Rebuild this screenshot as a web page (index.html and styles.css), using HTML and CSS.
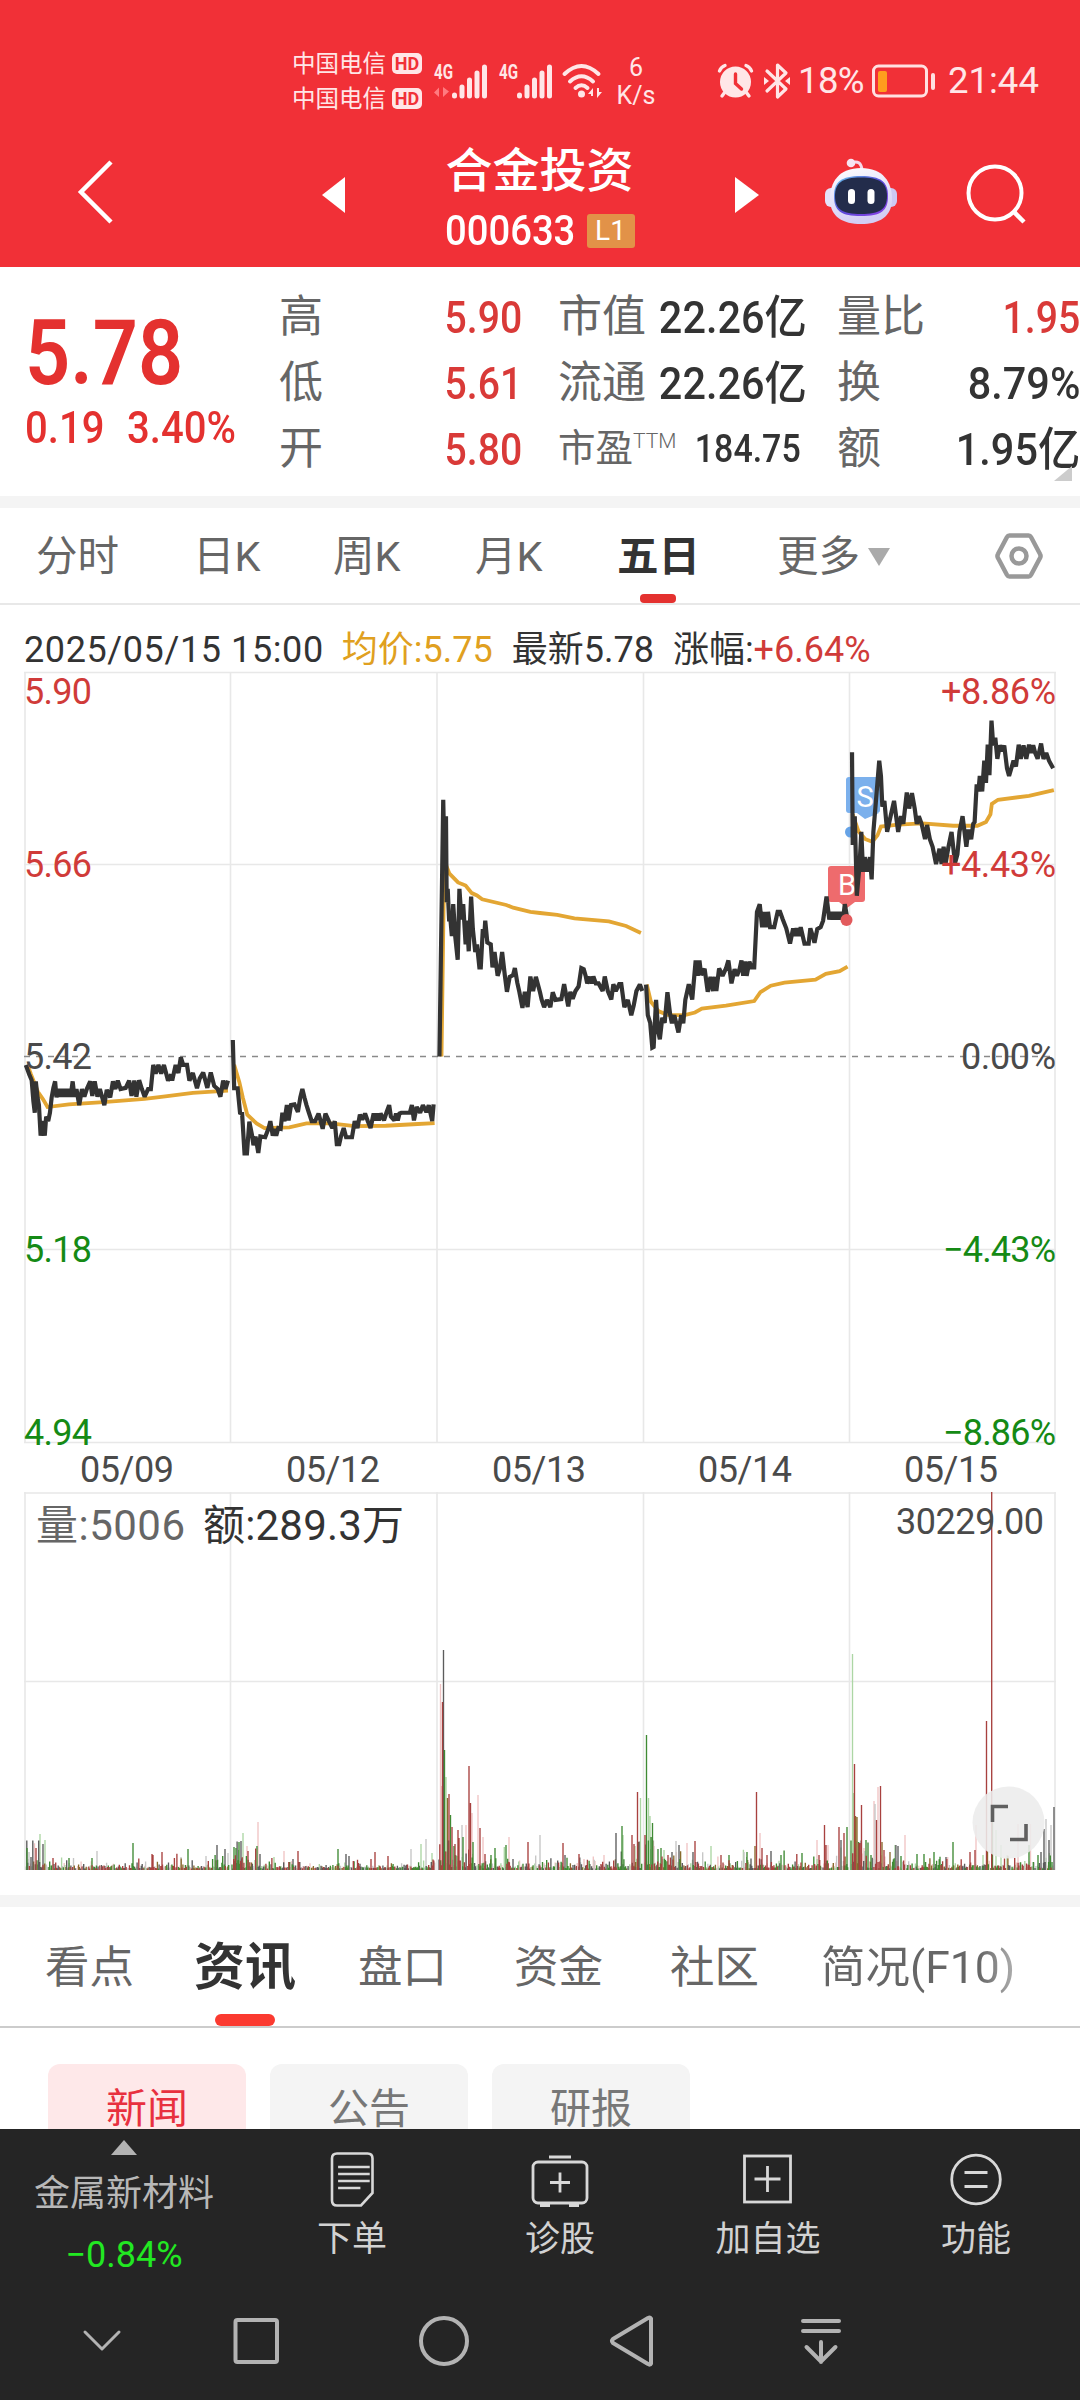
FILE: index.html
```html
<!DOCTYPE html>
<html lang="zh-CN">
<head>
<meta charset="utf-8">
<title>合金投资 000633</title>
<link rel="stylesheet" href="styles.css">
</head>
<body>
<div class="screen">
  <header class="header">
    <div class="status">
      <div class="carriers">
        <div class="carrier"><span>中国电信</span><b class="hd">HD</b></div>
        <div class="carrier"><span>中国电信</span><b class="hd">HD</b></div>
      </div>
      <svg class="signal" width="56" height="36" viewBox="0 0 56 36">
        <text x="0" y="16" textLength="19" lengthAdjust="spacingAndGlyphs" class="net">4G</text>
        <path d="M0 29.500l5-5v9.500zM9 24v10l6-5.500z" fill="#ff7b80"/>
        <path d="M20.500 33v-1M28 33V24M35.500 33V17M43 33V10M50.500 33V4" class="bars"/>
      </svg>
      <svg class="signal" width="56" height="36" viewBox="0 0 56 36">
        <text x="0" y="16" textLength="19" lengthAdjust="spacingAndGlyphs" class="net">4G</text>
        <path d="M20.500 33v-1M28 33V24M35.500 33V17M43 33V10M50.500 33V4" class="bars"/>
      </svg>
      <svg width="42" height="36" viewBox="0 0 42 36">
        <path d="M2.500 11Q19.500-5 36.500 11M8 18.500Q19.500 8 31 18.500M13.500 25Q19.500 19.500 25.500 25" fill="none" stroke="#ffe6e7" stroke-width="4" stroke-linecap="round"/>
        <circle cx="19.500" cy="31" r="3.500" fill="#ffe6e7"/>
        <path d="M26 31l5-6v8h-2v-2zM40 29l-5 6v-10h2v4z" fill="#ffe6e7"/>
      </svg>
      <div class="speed"><span>6</span><span>K/s</span></div>
      <svg width="36" height="36" viewBox="0 0 36 36">
        <circle cx="17.500" cy="19" r="15.500" fill="#ffe6e7"/>
        <path d="M1.500 8Q3 4 7 2.500M33.500 8Q32 4 28 2.500M7 29l-3 4M28 29l3 4" stroke="#ffe6e7" stroke-width="3.400" stroke-linecap="round" fill="none"/>
        <path d="M17.500 11v9.500l6 5.500" stroke="#f13037" stroke-width="3.400" stroke-linecap="round" fill="none"/>
      </svg>
      <svg width="28" height="38" viewBox="0 0 28 38">
        <path d="M3 9l19 18-8.500 8V3L22 11 3 29" fill="none" stroke="#ffe6e7" stroke-width="3.200" stroke-linejoin="round" stroke-linecap="round"/>
        <path d="M0 15l5 4-5 4zM26 15l-5 4 5 4z" fill="#ffe6e7"/>
      </svg>
      <span class="clock pct">18%</span>
      <svg width="64" height="36" viewBox="0 0 64 36">
        <rect x="1.500" y="3" width="53" height="30" rx="5" fill="none" stroke="#ffe0e1" stroke-width="3"/>
        <rect x="6" y="8" width="9" height="21" rx="2" fill="#ff9d1e"/>
        <rect x="59" y="10" width="4" height="17" rx="2" fill="#ffe0e1"/>
      </svg>
      <span class="clock">21:44</span>
    </div>
    <div class="titlebar">
      <svg class="back" width="38" height="66" viewBox="0 0 38 66"><path d="M35 3L5 33l30 30" fill="none" stroke="#fff" stroke-width="4.500"/></svg>
      <svg width="24" height="36" viewBox="0 0 24 36"><path d="M1 18L24 0v36z" fill="#fff"/></svg>
      <div class="stock">
        <h1>合金投资</h1>
        <div class="code"><span class="code-num din">000633</span><span class="level">L1</span></div>
      </div>
      <svg width="24" height="36" viewBox="0 0 24 36"><path d="M25 18L1 0v36z" fill="#fff"/></svg>
      <svg class="robot" width="72" height="68" viewBox="0 0 72 68">
        <defs>
          <linearGradient id="shell" x1="0" y1="0" x2="0.300" y2="1"><stop offset="0" stop-color="#fff"/><stop offset="1" stop-color="#d3cdf4"/></linearGradient>
          <linearGradient id="rim" x1="0" y1="0" x2="1" y2="1"><stop offset="0" stop-color="#67c6ec"/><stop offset="0.500" stop-color="#5a4ad8"/><stop offset="1" stop-color="#8b3fe6"/></linearGradient>
        </defs>
        <path d="M26 5Q36 1 37 12" fill="none" stroke="#f6d9ea" stroke-width="3"/>
        <circle cx="26" cy="5" r="4.300" fill="#f7e4f2"/>
        <rect x="0" y="30" width="14" height="19" rx="6" fill="#e4e2fa"/>
        <rect x="58" y="30" width="14" height="19" rx="6" fill="#cdc8f3"/>
        <path d="M36 10C58 10 67 24 67 41C67 59 54 66 36 66C18 66 5 59 5 41C5 24 14 10 36 10z" fill="url(#shell)"/>
        <path d="M36 18C56 18 63 24 63 38C63 53 56 58 36 58C16 58 9 53 9 38C9 24 16 18 36 18z" fill="url(#rim)"/>
        <path d="M36 19.500C55 19.500 62 25 62 38C62 51 55 56 36 56C17 56 10 51 10 38C10 25 17 19.500 36 19.500z" fill="#232c4b"/>
        <rect x="23" y="31" width="7" height="15" rx="3.500" fill="#fff"/>
        <rect x="42.500" y="31" width="7" height="15" rx="3.500" fill="#fff"/>
      </svg>
      <svg class="search" width="62" height="62" viewBox="0 0 62 62"><g fill="none" stroke="#fff" stroke-width="4"><circle cx="29" cy="30" r="26.500"/><path d="M47 48l11 11" stroke-width="4.500"/></g></svg>
    </div>
  </header>

  <section class="quote">
    <div class="last">
      <div class="price din">5.78</div>
      <div class="change"><span class="din">0.19</span><span class="din">3.40%</span></div>
    </div>
    <dl class="stats">
      <div><dt>高</dt><dd class="din up">5.90</dd></div>
      <div><dt>市值</dt><dd class="din wide inset">22.26<i>亿</i></dd></div>
      <div><dt>量比</dt><dd class="din up">1.95</dd></div>
      <div><dt>低</dt><dd class="din up">5.61</dd></div>
      <div><dt>流通</dt><dd class="din wide inset">22.26<i>亿</i></dd></div>
      <div><dt>换</dt><dd class="din wide">8.79%</dd></div>
      <div><dt>开</dt><dd class="din up">5.80</dd></div>
      <div><dt class="pe">市盈<sup>TTM</sup></dt><dd class="din small">184.75</dd></div>
      <div><dt>额</dt><dd class="din wide">1.95<i>亿</i></dd></div>
    </dl>
    <svg class="corner" width="18" height="15" viewBox="0 0 18 15"><path d="M18 0v15H0z" fill="#ccc"/></svg>
  </section>

  <nav class="periods">
    <span>分时</span><span>日K</span><span>周K</span><span>月K</span><span class="active">五日</span>
    <span class="more">更多<svg width="22" height="18" viewBox="0 0 22 18"><path d="M0 0h22L11 18z" fill="#aaa"/></svg></span>
    <svg class="settings" width="50" height="48" viewBox="0 0 50 48"><g fill="none" stroke="#999" stroke-width="4.500"><path d="M15.500 3.500h19a3 3 0 0 1 2.500 1.500l9 17a4 4 0 0 1 0 4l-9 17a3 3 0 0 1-2.500 1.500h-19a3 3 0 0 1-2.500-1.500l-9-17a4 4 0 0 1 0-4l9-17a3 3 0 0 1 2.500-1.500z"/><circle cx="25" cy="24" r="7.500"/></g></svg>
  </nav>

  <div class="legend">
    <span class="l-date">2025/05/15 15:00</span><span class="avg">均价:5.75</span><span>最新5.78</span><span>涨幅:<em>+6.64%</em></span>
  </div>

  <svg class="chart" width="1080" height="1205" viewBox="0 672 1080 1205">
    <g class="grid">
      <path d="M24 672.500H1056M24 864.500H1056M24 1249.500H1056M24 1442.500H1056M24 1493H1056M24 1681.500H1056"/>
      <path d="M25 672V1443M25 1492V1870M230.500 672V1443M230.500 1492V1870M437 672V1443M437 1492V1870M643.500 672V1443M643.500 1492V1870M849.500 672V1443M849.500 1492V1870M1055 672V1443M1055 1492V1870"/>
    </g>
    <path class="zero" d="M24 1056.500H1056"/>

    <!-- trade markers -->
    <circle cx="850.500" cy="832" r="5.500" fill="#66a3e6"/>
    <path d="M849 777h28a3 3 0 0 1 3 3v30a3 3 0 0 1-3 3h2l-14 6-8-6h-8a3 3 0 0 1-3-3v-30a3 3 0 0 1 3-3z" fill="#7bb0ec"/>
    <path d="M831 866h31a3 3 0 0 1 3 3v30a3 3 0 0 1-3 3h-7l-8 6-8-6h-8a3 3 0 0 1-3-3v-30a3 3 0 0 1 3-3z" fill="#ee6b6d"/>
    <text x="865" y="807" class="mark">S</text>
    <text x="847" y="895" class="mark">B</text>

    <!-- price and average curves, one polyline per trading day -->
    <g transform="translate(0 600) scale(.34439 .38265)">
      <g class="mean">
        <polyline points="80,1215 90,1240 110,1285 125,1305 138,1325 200,1318 300,1312 420,1304 480,1297 560,1288 662,1282"/>
        <polyline points="680,1215 695,1260 705,1300 718,1345 745,1368 768,1380 840,1378 890,1368 960,1368 1030,1375 1120,1374 1200,1370 1262,1367"/>
        <polyline points="1282,1193 1288,800 1294,690 1305,715 1330,738 1352,746 1370,766 1385,772 1400,782 1470,797 1490,804 1540,815 1568,818 1618,823 1668,832 1768,840 1818,852 1861,870"/>
        <polyline points="1878,1005 1890,1050 1913,1075 1938,1084 1988,1085 2018,1078 2038,1068 2108,1060 2190,1048 2208,1025 2238,1008 2278,1000 2368,992 2398,977 2438,970 2461,958"/>
        <polyline points="2476,560 2493,605 2513,625 2533,632 2548,615 2558,592 2608,587 2678,584 2768,590 2838,590 2863,580 2876,560 2880,533 2898,522 2988,512 3060,497"/>
      </g>
      <g class="line">
        <polyline points="75,1215 85,1240 92,1255 97,1310 101,1340 104,1258 109,1300 113,1320 118,1400 124,1362 130,1400 134,1350 140,1362 145,1340 150,1300 155,1275 160,1258 164,1300 169,1278 174,1298 179,1278 184,1298 189,1278 194,1298 199,1278 205,1298 211,1258 216,1298 222,1278 230,1320 238,1278 245,1298 252,1278 262,1258 268,1296 275,1258 283,1298 290,1278 303,1320 310,1280 320,1300 328,1258 335,1278 342,1256 350,1278 365,1275 375,1256 382,1296 390,1256 396,1298 404,1255 412,1278 420,1298 430,1278 438,1278 445,1215 452,1238 460,1215 468,1238 476,1215 488,1256 497,1240 500,1256 510,1215 518,1236 525,1195 532,1215 543,1215 550,1256 560,1236 572,1276 580,1250 590,1235 602,1275 612,1235 622,1270 632,1278 640,1298 648,1256 655,1278 662,1256"/>
        <polyline points="676,1150 680,1276 690,1276 697,1340 703,1342 710,1446 717,1446 724,1363 732,1400 736,1425 742,1402 750,1445 756,1402 770,1404 780,1380 785,1362 792,1400 798,1382 802,1400 808,1380 815,1382 820,1340 826,1362 833,1320 838,1360 845,1320 855,1318 865,1338 872,1300 878,1278 884,1300 890,1320 897,1340 905,1362 915,1362 925,1342 937,1382 945,1342 955,1362 965,1380 972,1362 978,1422 985,1422 990,1402 998,1380 1005,1404 1022,1404 1030,1362 1038,1380 1045,1345 1052,1358 1060,1342 1068,1362 1076,1380 1085,1342 1090,1360 1095,1342 1100,1360 1105,1342 1115,1360 1122,1340 1130,1320 1135,1350 1145,1360 1150,1342 1155,1360 1160,1342 1165,1340 1190,1340 1196,1320 1202,1360 1210,1325 1220,1340 1228,1320 1238,1338 1245,1320 1255,1362 1259,1318"/>
        <polyline points="1276,1193 1287,522 1291,700 1295,565 1297,790 1300,755 1304,835 1308,835 1312,878 1316,795 1322,880 1329,940 1334,755 1340,835 1345,795 1352,900 1356,838 1361,918 1368,775 1373,860 1380,920 1385,900 1392,960 1396,960 1402,860 1406,882 1409,838 1415,895 1425,900 1430,960 1436,920 1445,982 1452,962 1458,920 1466,982 1472,1024 1480,985 1490,980 1495,962 1502,1000 1508,1024 1517,1066 1524,1024 1532,1064 1540,984 1548,1022 1556,985 1568,1025 1573,1045 1580,1064 1588,1045 1598,1064 1605,1025 1613,1045 1630,1043 1638,1004 1650,1062 1656,1024 1663,1042 1671,1022 1680,1010 1688,962 1695,965 1701,984 1705,1002 1713,985 1718,1002 1723,984 1730,1002 1738,1002 1750,1022 1756,984 1765,1022 1775,1044 1781,1004 1788,1022 1798,1004 1804,1004 1813,1064 1823,1045 1833,1085 1840,1060 1848,1022 1858,1005 1865,1022"/>
        <polyline points="1876,1005 1881,1085 1888,1105 1894,1170 1898,1168 1905,1045 1911,1126 1916,1148 1923,1092 1930,1105 1938,1025 1946,1084 1951,1106 1958,1085 1970,1130 1978,1085 1984,1106 1990,1045 2000,1004 2010,1044 2020,942 2026,982 2031,942 2036,980 2046,964 2055,1024 2063,985 2070,1022 2076,985 2080,1022 2088,963 2098,982 2108,963 2115,942 2124,1002 2133,965 2140,982 2148,963 2153,942 2158,982 2163,945 2168,982 2176,945 2182,960 2190,960 2198,815 2206,795 2213,855 2220,815 2225,855 2230,815 2236,855 2248,855 2258,815 2265,815 2273,835 2283,858 2294,898 2303,858 2308,878 2313,858 2320,878 2325,855 2336,898 2348,898 2353,858 2360,878 2365,896 2373,860 2383,855 2390,838 2400,775 2408,835 2413,815 2418,835 2423,815 2428,835 2433,815 2438,835 2443,815 2448,835 2453,795 2461,835"/>
        <polyline points="2474,398 2476,640 2482,565 2488,773 2496,690 2501,606 2506,710 2511,672 2518,710 2526,672 2531,730 2536,606 2543,530 2553,420 2558,460 2562,540 2568,525 2576,606 2586,565 2596,525 2602,565 2608,606 2616,565 2623,585 2633,503 2640,545 2648,505 2656,545 2662,585 2668,565 2676,585 2686,625 2692,588 2700,625 2708,645 2718,690 2728,650 2734,690 2740,645 2746,688 2754,645 2763,606 2773,688 2780,665 2786,606 2795,565 2806,645 2812,600 2820,625 2826,585 2830,580 2836,482 2841,500 2845,460 2852,500 2858,420 2863,478 2868,378 2873,458 2879,315 2884,380 2890,360 2896,415 2903,380 2910,395 2916,380 2924,440 2930,460 2943,420 2950,435 2958,378 2964,415 2972,380 2980,415 2988,378 2994,400 3000,380 3006,400 3013,415 3023,375 3030,415 3038,400 3046,420 3058,440"/>
      </g>
    </g>
    <circle cx="846.500" cy="920" r="6" fill="#e25a5c"/>

    <g class="axis">
      <text x="24" y="704" class="up" textLength="68">5.90</text>
      <text x="24" y="876.500" class="up" textLength="68">5.66</text>
      <text x="24" y="1069" textLength="68">5.42</text>
      <text x="24" y="1262" class="down" textLength="68">5.18</text>
      <text x="24" y="1445" class="down" textLength="68">4.94</text>
      <text x="941" y="704" class="up" textLength="115">+8.86%</text>
      <text x="941" y="876.500" class="up" textLength="115">+4.43%</text>
      <text x="961" y="1069" textLength="95">0.00%</text>
      <text x="943" y="1262" class="down" textLength="113">−4.43%</text>
      <text x="943" y="1445" class="down" textLength="113">−8.86%</text>
      <text x="80" y="1482" textLength="94">05/09</text>
      <text x="286" y="1482" textLength="94">05/12</text>
      <text x="492" y="1482" textLength="94">05/13</text>
      <text x="698" y="1482" textLength="94">05/14</text>
      <text x="904" y="1482" textLength="94">05/15</text>
    </g>
    <g id="volume" class="volume"></g>
    <g class="axis">
      <text x="36" y="1540" class="vol-a" textLength="149">量:5006</text>
      <text x="203" y="1540" class="vol-b" textLength="201">额:289.3万</text>
      <text x="896" y="1534" textLength="148">30229.00</text>
    </g>
    <circle cx="1008.500" cy="1822.500" r="36" fill="#ececec" fill-opacity=".88"/>
    <path d="M992.500 1822V1806.500H1008M1026 1824V1839.500H1010" fill="none" stroke="#606060" stroke-width="3.600"/>
  </svg>

  <nav class="sections">
    <span>看点</span><span class="active">资讯</span><span>盘口</span><span>资金</span><span>社区</span><span class="fade">简况(F10)</span>
  </nav>
  <div class="pills"><span class="on">新闻</span><span>公告</span><span>研报</span></div>

  <footer class="footer">
    <div class="actions">
      <div class="sector">
        <svg width="26" height="15" viewBox="0 0 26 15"><path d="M13 0l13 15H0z" fill="#b3b3b3"/></svg>
        <span>金属新材料</span><span class="fall">−0.84%</span>
      </div>
      <div class="action">
        <svg width="60" height="60" viewBox="-3 0 60 60"><g fill="none" stroke="#d8d8d8" stroke-width="2.600"><path d="M12 4.500h30.500q5 0 5 5V44L36 56.500H12q-5 0-5-5v-42q0-5 5-5z"/><path d="M13 18h34M13 25h34M13 32h34M13 39h24"  transform="translate(1 0) scale(.93 1)"/></g></svg>
        <span>下单</span>
      </div>
      <div class="action">
        <svg width="60" height="60" viewBox="0 0 60 60"><g fill="none" stroke="#d8d8d8" stroke-width="2.800"><rect x="3" y="13" width="54" height="41" rx="5"/><path d="M19 8h22M30 23.500v20M20 33.500h20"/><path d="M10 56h10M39 56h10" stroke-width="4"/></g></svg>
        <span>诊股</span>
      </div>
      <div class="action">
        <svg width="60" height="60" viewBox="0 0 60 60"><g fill="none" stroke="#d8d8d8" stroke-width="2.800"><rect x="6.500" y="7" width="46" height="46"/><path d="M29.500 17v26M16.500 30h26"/></g></svg>
        <span>加自选</span>
      </div>
      <div class="action">
        <svg width="60" height="60" viewBox="0 0 60 60"><g fill="none" stroke="#d8d8d8" stroke-width="2.800"><circle cx="30" cy="30.500" r="24.300"/><path d="M18.500 23.500h23M18.500 37.500h23"/></g></svg>
        <span>功能</span>
      </div>
    </div>
    <div class="sysnav">
      <svg width="1080" height="60" viewBox="0 2311 1080 60"><g fill="none" stroke="#b3b3b3" stroke-width="4" stroke-linejoin="round" stroke-linecap="round">
        <path d="M85 2332l17 17 17-17" stroke-width="3"/>
        <rect x="235.500" y="2320" width="41.500" height="42" rx="2"/>
        <circle cx="444" cy="2341" r="23"/>
        <path d="M651 2318.500v45q-1 2-3 .5l-35-21q-2-2 0-4l35-21q2-1 3 .500z"/>
        <path d="M803 2321h36M803 2331h36M821 2342v20M806.500 2347l14.500 14.500 14.500-14.500"/>
      </g></svg>
    </div>
  </footer>
</div>
<script src="volume.js"></script>
</body>
</html>
```
FILE: styles.css
```css
* { box-sizing: border-box; margin: 0; padding: 0; }
body { background: #fff; font-family: Roboto, "Noto Sans CJK SC", sans-serif; color: #333; }
svg { display: block; overflow: visible; }
.screen { width: 1080px; height: 2400px; overflow: hidden; display: flex; flex-direction: column; line-height: 1; white-space: nowrap; }
.screen > * { flex: none; }

.din { display: inline-block; font-weight: 500; transform: scaleX(.87); transform-origin: left center; }

.header { height: 267px; background: #f13037; color: #fff; }
.status { height: 122px; padding-top: 40px; display: grid; grid-template-columns: 142px 65px 63px 56px 100px 46px 34px 74px 76px 1fr; padding-left: 292px; align-items: center; color: #ffe6e7; }
.carriers { display: flex; flex-direction: column; gap: 9px; }
.carrier { display: flex; align-items: center; gap: 6px; height: 26px; font-size: 23.5px; line-height: 26px; }
.hd { width: 30px; height: 21px; border-radius: 5px; background: #ffe6e7; color: #f13037; font-size: 18px; line-height: 21px; text-align: center; }
.net { font-size: 20px; font-weight: 700; fill: #ffe6e7; }
.bars { stroke: #ffe6e7; stroke-width: 5; stroke-linecap: round; }
.speed { width: 36px; display: flex; flex-direction: column; align-items: center; gap: 3px; font-size: 25px; }
.clock { font-size: 36.5px; }
.pct { letter-spacing: -.6px; }

.titlebar { height: 145px; display: grid; grid-template-columns: 245px 24px 389px 90px 141px 62px; padding-left: 76px; align-items: center; }
.back { margin-top: -5px; }
.stock { display: flex; flex-direction: column; align-items: center; padding-top: 2px; }
h1 { font-size: 47px; line-height: 56px; font-weight: 500; }
.code { width: 190px; height: 34px; margin-top: 15px; display: flex; justify-content: space-between; align-items: center; }
.code-num { font-size: 42px; width: 128px; transform: scaleX(.91); }
.level { width: 48px; height: 34px; border-radius: 3px; background: #e29248; font-size: 28px; line-height: 34px; text-align: center; }
.robot { margin: -5px 0 0 1px; }
.search { margin: -2px 0 0 1px; }

.quote { position: relative; height: 241px; border-bottom: 12px solid #f4f4f4; display: flex; }
.last { width: 279px; padding-left: 25px; color: #e4312f; }
.price { font-size: 91px; margin-top: 41px; font-weight: 600; }
.change { display: flex; font-size: 45px; margin-top: 6px; }
.change .din { width: 102px; transform: scaleX(.89); }
.stats { display: grid; grid-template-columns: 243px 243px 243px; column-gap: 36px; grid-auto-rows: 66px; padding-top: 17px; }
.stats > div { display: flex; justify-content: space-between; align-items: center; }
dt { font-size: 44px; color: #666; }
dd.din { font-size: 45px; transform-origin: right center; }
dd.wide { transform: scaleX(.92); }
dd.inset { margin-right: 3px; }
dd i { font-style: normal; font-size: 46px; }
dd.small { font-size: 39px; }
dt.pe { font-size: 37.5px; }
.pe sup { font-size: 21px; vertical-align: 13px; line-height: 0; font-weight: 300; }
.up { color: #d93a38; }
.corner { position: absolute; right: 8px; bottom: 15px; }

.periods { height: 97px; border-bottom: 2px solid #e8e8e8; display: grid; grid-template-columns: 157px 140px 142px 142px 160px 217px 50px; padding: 3px 0 0 36px; align-items: center; font-size: 41.5px; line-height: 92px; color: #666; }
.periods .active { width: 80px; font-weight: 700; color: #333; position: relative; }
.active::after { content: ""; position: absolute; background: #e4312f; }
.periods .active::after { left: 23px; bottom: 0; width: 36px; height: 9px; border-radius: 4px; }
.more { display: flex; align-items: center; gap: 8px; }
.settings { margin-top: -3px; }

.legend { height: 67px; padding: 23px 0 0 24px; display: flex; align-items: center; font-size: 36px; line-height: 44px; color: #333; }
.l-date { letter-spacing: .6px; margin-right: 18px; }
.avg { color: #e0a020; margin-right: 19px; }
.legend span:nth-child(3) { margin-right: 19px; }
.legend em { font-style: normal; color: #d03b39; }

.grid path { fill: none; stroke: #e8e8e8; stroke-width: 1.6; }
.zero { stroke: #8a8a8a; stroke-width: 1.6; stroke-dasharray: 6 6; }
.mark { font-size: 29px; fill: #fff; text-anchor: middle; }
.mean polyline, .line polyline { fill: none; vector-effect: non-scaling-stroke; stroke-linejoin: miter; }
.mean polyline { stroke: #e3a633; stroke-width: 3.8; }
.line polyline { stroke: #333; stroke-width: 4.2; stroke-miterlimit: 2; }
.axis text { font-size: 36px; fill: #4a4a4a; }
.axis .up { fill: #d03b39; }
.axis .down { fill: #158a15; }
.axis .vol-a { font-size: 42px; fill: #666; }
.axis .vol-b { font-size: 42px; fill: #333; }
.volume path { fill: none; stroke-width: 1.35; }

.sections { height: 133px; margin-top: 18px; border-top: 12px solid #f4f4f4; border-bottom: 2px solid #ccc; padding: 3px 0 0 45px; display: grid; grid-template-columns: 149px 164px 156px 156px 151px 210px; font-size: 44.5px; line-height: 116px; height: 133px; color: #666; }
.sections .active { position: relative; font-size: 51px; font-weight: 700; color: #333; }
.sections .active::after { left: 21px; bottom: 0; width: 60px; height: 12px; border-radius: 6px; background: #fb3a30; }
.fade { background: linear-gradient(90deg, #666 75%, #bbb 95%); background-clip: text; -webkit-background-clip: text; color: transparent; }

.pills { height: 101px; padding: 36px 0 0 48px; display: flex; gap: 24px; overflow: hidden; }
.pills span { width: 198px; height: 90px; border-radius: 12px; background: #f4f4f4; color: #777; font-size: 41px; line-height: 90px; text-align: center; }
.pills .on { background: #fee8e9; color: #e8303f; }

.footer { height: 271px; background: #252525; color: #d2d2d2; }
.actions { height: 160px; display: grid; grid-template-columns: 248px 208px 208px 208px 208px; font-size: 35px; }
.sector { display: flex; flex-direction: column; align-items: center; padding-top: 11px; color: #b8b8b8; font-size: 36px; }
.sector span { line-height: 61px; margin-top: 9px; }
.sector .fall { color: #22e822; margin-top: 0; }
.action { display: flex; flex-direction: column; align-items: center; padding-top: 20px; }
.action span { line-height: 54px; margin-top: 4px; }
.sysnav { padding-top: 22px; }
```
FILE: volume.js
```js
// Minute-by-minute turnover bars: a quiet base plus the notable minutes.
const BASE = 1870;
const COLORS = { r: '#a8413f', g: '#3f8a34', k: '#5c5c5c', R: '#f0c4c4', G: '#acd6a4', K: '#c6c6c6', b: '#8a6a2c' };
const PEAKS = `27,1848,g 29,1852,K 31,1857,k 36,1848,r 40,1834,G 45,1840,G 43,1844,k 53,1858,r 69,1858,g 92,1858,g 97,1851,K 133,1843,g 152,1854,r 153,1855,r 162,1852,r 181,1857,K 188,1849,g 206,1856,K 217,1845,k 225,1849,k 228,1853,K
234,1847,g 236,1848,g 239,1842,g 241,1841,k 243,1833,G 247,1846,R 248,1851,r 258,1822,R 257,1846,g 260,1854,k 274,1857,G 284,1851,R 298,1851,r 293,1859,k 338,1849,g 346,1854,k 349,1856,k 375,1852,r 371,1859,r 388,1856,r 411,1849,K 421,1844,G 426,1839,K 432,1853,G
440.5,1684,R 441.5,1786,R 442.5,1702,r 443.5,1650,k 444.5,1750,g 446,1777,G 447.5,1798,b 449,1794,r 450.5,1815,g 452,1827,r 454,1846,g 455,1844,r 458,1830,r 459,1838,r 462,1825,K 463,1837,g 466,1825,R 469,1766,r 470.500,1803,r 472,1813,R 473,1842,g 478,1795,R 480,1828,r 483,1837,R 485,1854,r 491,1855,g 495,1848,g 506,1845,g 509,1837,R 513,1859,k 528,1842,r 540,1835,K 563,1843,r 565,1855,k 579,1854,r 604,1855,R 616,1833,k 622,1826,g 623,1835,G 632,1835,r 634,1844,r 635,1846,G 637.5,1792,r 638.5,1842,b 640.5,1798,G
645,1835,r 646.5,1735,g 648.500,1798,G 650,1816,G 651,1837,g 652.5,1823,g 654,1846,R 658,1849,g 661,1848,g 664,1850,G 668,1855,r 672,1852,k 676,1841,K 679,1845,k 687,1843,R 695,1841,r 693,1852,k 711,1846,G 721,1855,r 729,1855,g 744,1852,K 747,1852,g 755,1846,b 756.5,1792,r 760,1833,R 762,1848,r 767,1855,r 771,1851,k 781,1855,g 802,1853,g 817,1840,R 819,1855,r 824.5,1825,r 826,1845,r 828,1845,R 839,1827,r 841,1840,k 844,1833,r 847,1827,g
852.5,1654,G 853.5,1793,G 854.5,1764,r 855.5,1816,b 857,1817,b 859,1843,r 861.5,1805,r 860,1843,r 864,1848,R 866,1840,g 871,1855,g 874,1801,R 875,1804,K 876.5,1820,r 878,1787,R 880.500,1786,r 882,1842,b 884,1850,r 895,1845,G 898,1846,k 905,1835,R 917,1854,g 924,1854,g 934,1852,g 946,1857,k 953,1842,g 970,1852,r 976,1825,R 975,1850,r 983,1855,G 986.5,1721,r 987.5,1851,b 991.7,1492,r 992.5,1820,g 996,1830,G 1001,1845,G 1007,1855,G 1018,1824,R 1030.500,1824,R 1029,1845,g 1038,1855,g 1041,1852,k 1044,1829,k 1046,1819,K 1049,1840,k 1051,1825,K 1054,1807,k`;

let seed = 20250515;
const rand = () => (seed = (seed * 48271) % 2147483647) / 2147483647;
const paths = {};
const add = (x, top, key) => { paths[key] = (paths[key] || '') + `M${x} ${BASE}V${top}`; };

[26, 232, 439, 645, 851].forEach((start, day) => {
  const activity = [0.9, 0.8, 1.2, 1.2, 1.2][day];
  for (let i = 0; i < 240; i++) {
    const x = (start + i * 0.848).toFixed(1);
    const opening = 1 + 3.2 * Math.exp(-i / 22) + 0.8 * Math.exp(-(239 - i) / 12);
    const size = -Math.log(1 - rand()) * 2.6 * activity * opening;
    const key = 'rgkrgkRGKb'[Math.floor(rand() * 10)];
    add(x, (BASE - 1.5 - Math.min(size, 28)).toFixed(1), key);
  }
});
PEAKS.split(/\s+/).forEach(p => add(...p.split(',')));

document.getElementById('volume').innerHTML = ['R', 'G', 'K', 'b', 'k', 'g', 'r']
  .map(k => `<path d="${paths[k] || ''}" stroke="${COLORS[k]}"/>`).join('');
```
